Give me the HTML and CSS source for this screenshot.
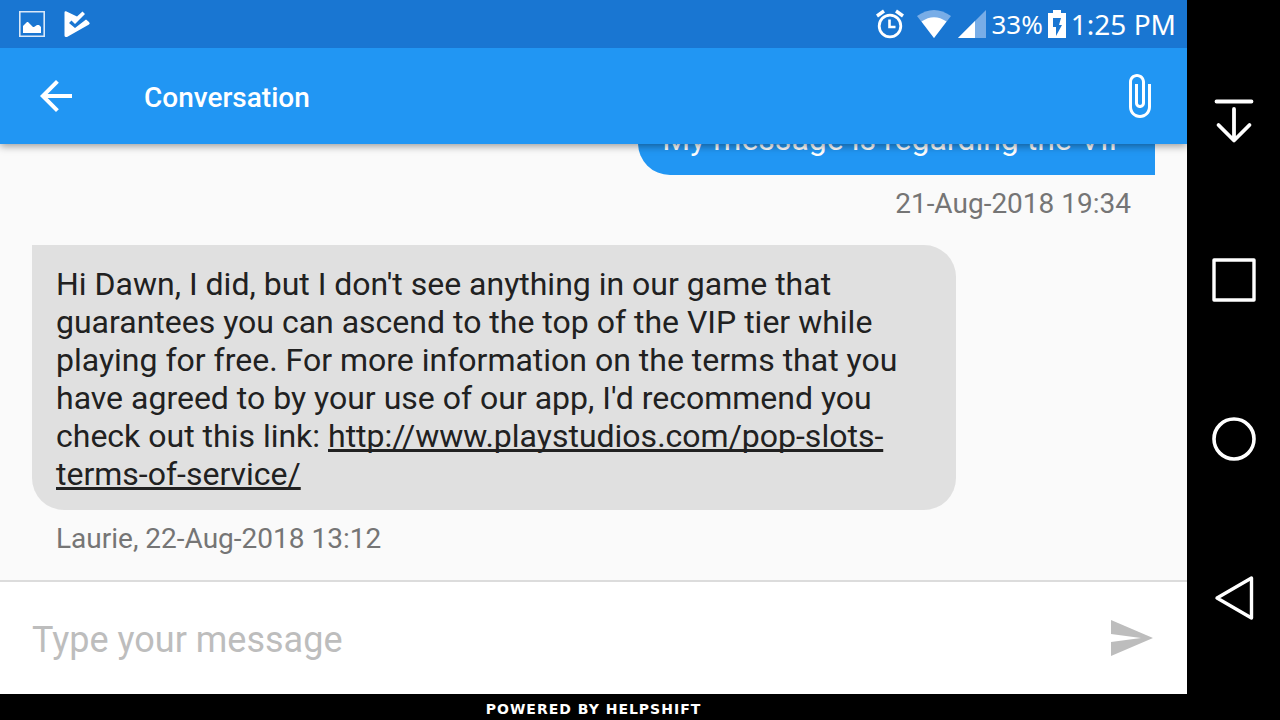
FILE: index.html
```html
<!DOCTYPE html>
<html lang="en">
<head>
<meta charset="utf-8">
<meta name="viewport" content="width=device-width, initial-scale=1">
<title>Conversation</title>
<link rel="stylesheet" href="styles.css">
</head>
<body class="device">
<div class="app">
  <div class="status">
    <div class="status-notes">
      <svg width="26" height="26" viewBox="0 0 26 26" aria-hidden="true"><path d="M.8.8h24.4v24.4H.8z" fill="none" stroke="#d9e8f8" stroke-width="1.6"/><path d="M4 22v-7l4-4h1l5 5h1l3-2h2l2 2v6z" fill="#fff"/></svg>
      <svg width="26" height="26" viewBox="0 0 26 26" aria-hidden="true"><path d="M.5 1.5Q.5 0 2 .3L13 5.500 18.500.5 21 3 11 13 7.500 9.500 5 12l6 5L22 8.500l3 2.500q1.500 1.500 0 2.500L3 26Q.5 26.500.5 24.500z" fill="#fff"/></svg>
    </div>
    <div class="status-system">
      <svg class="alarm" width="28" height="28" viewBox="0 0 28 28" aria-hidden="true"><g fill="none" stroke="#fff"><circle cx="14" cy="16" r="10.800" stroke-width="2.800"/><path d="M13.500 9.500v7.500h6" stroke-width="2.600"/><path d="M1 6l7-5M27 6l-7-5" stroke-width="3.400"/></g></svg>
      <svg class="wifi" width="34" height="28" viewBox="0 0 34 28" aria-hidden="true"><path d="M0 6Q17-6 34 6L17 28z" fill="#78ade7"/><path d="M4.500 11.500Q17 3 29.500 11.500L17 28z" fill="#fff"/></svg>
      <svg class="signal" width="28" height="28" viewBox="0 0 28 28" aria-hidden="true"><path d="M28 0v28H0z" fill="#78ade7"/><path d="M17 11v17H0z" fill="#fff"/></svg>
      <span class="charge">33%</span>
      <svg class="battery" width="18" height="28" viewBox="0 0 18 28" aria-hidden="true"><path d="M5 0h8v3h5v25H0V3h5z" fill="#fff"/><path d="M5 8h8l-2 7h3L8 26v-9H5z" fill="#1976d2"/></svg>
      <time class="clock">1:25 PM</time>
    </div>
  </div>

  <header class="bar">
    <button class="icon-button" type="button" aria-label="Back"><svg width="48" height="48" viewBox="0 0 24 24" aria-hidden="true"><path d="M20 11H7.830l5.590-5.590L12 4l-8 8 8 8 1.410-1.410L7.830 13H20z" fill="#fff"/></svg></button>
    <h1 class="title">Conversation</h1>
    <button class="icon-button" type="button" aria-label="Attach a file"><svg width="48" height="48" viewBox="0 0 24 24" aria-hidden="true"><path d="M16.500 6v11.500c0 2.210-1.790 4-4 4s-4-1.790-4-4V5c0-1.380 1.120-2.500 2.500-2.500s2.500 1.120 2.500 2.500v10.500c0 .55-.45 1-1 1s-1-.45-1-1V6H10v9.500c0 1.380 1.120 2.500 2.500 2.500s2.500-1.120 2.500-2.500V5c0-2.210-1.790-4-4-4S7 2.790 7 5v12.500c0 3.040 2.460 5.500 5.500 5.500s5.500-2.460 5.500-5.500V6z" fill="#fff"/></svg></button>
  </header>

  <main class="messages">
    <article class="message sent">
      <p class="bubble">My message is regarding the VIP</p>
      <time class="caption">21-Aug-2018 19:34</time>
    </article>
    <article class="message received">
      <p class="bubble">Hi Dawn, I did, but I don't see anything in our game that guarantees you can ascend to the top of the VIP tier while playing for free. For more information on the terms that you have agreed to by your use of our app, I'd recommend you check out this link: <a class="link" href="http://www.playstudios.com/pop-slots-terms-of-service/">http://www.playstudios.com/pop-slots-terms-of-service/</a></p>
      <span class="caption">Laurie, 22-Aug-2018 13:12</span>
    </article>
  </main>

  <form class="composer">
    <input class="field" type="text" placeholder="Type your message" aria-label="Type your message">
    <button class="icon-button" type="submit" aria-label="Send"><svg width="48" height="48" viewBox="0 0 24 24" aria-hidden="true"><path d="M2 3l21 9-21 9v-7l15-2-15-2z" fill="#bdbdbd"/></svg></button>
  </form>
  <footer class="credit">POWERED BY HELPSHIFT</footer>
</div>

<nav class="keys" aria-label="System">
  <button class="key" type="button" aria-label="Notifications"><svg width="44" height="44" viewBox="0 0 44 44" aria-hidden="true"><path d="M4.500 2.500h35M22 10v31M6.500 26L22 41.500 37.500 26" fill="none" stroke="#fff" stroke-width="3.800" stroke-linecap="round" stroke-linejoin="round"/></svg></button>
  <button class="key" type="button" aria-label="Recent apps"><svg width="44" height="44" viewBox="0 0 44 44" aria-hidden="true"><path d="M2 2h40v40H2z" fill="none" stroke="#fff" stroke-width="3.400" stroke-linejoin="round"/></svg></button>
  <button class="key" type="button" aria-label="Home"><svg width="44" height="44" viewBox="0 0 44 44" aria-hidden="true"><circle cx="22" cy="22" r="20" fill="none" stroke="#fff" stroke-width="3.600"/></svg></button>
  <button class="key" type="button" aria-label="Back"><svg width="44" height="44" viewBox="0 0 44 44" aria-hidden="true"><path d="M39.500 2v40L5 22z" fill="none" stroke="#fff" stroke-width="3.400" stroke-linejoin="round"/></svg></button>
</nav>
</body>
</html>
```
FILE: styles.css
```css
* {
  box-sizing: border-box;
}

.device {
  display: grid;
  grid-template-columns: minmax(0, 1fr) 93px;
  height: 100vh;
  margin: 0;
  background: #000;
  font-family: Roboto, sans-serif;
  overflow: hidden;
}

.device svg {
  display: block;
  overflow: visible;
}

.app {
  display: flex;
  flex-direction: column;
  min-height: 0;
  overflow: hidden;
}

.status {
  position: relative;
  z-index: 2;
  display: flex;
  justify-content: space-between;
  align-items: center;
  height: 48px;
  flex: none;
  padding: 0 11px 0 19px;
  background: #1976d2;
  color: #fff;
  font-family: "Noto Sans", sans-serif;
}

.status-notes,
.status-system {
  display: flex;
  align-items: center;
}

.status-notes {
  gap: 19px;
}

.wifi {
  margin-left: 13px;
}

.signal {
  margin: 0 5px 0 7px;
}

.charge {
  font-size: 26px;
  line-height: 48px;
}

.battery {
  margin: 0 5px;
}

.clock {
  font-size: 28px;
  line-height: 48px;
}

.bar {
  position: relative;
  z-index: 1;
  display: flex;
  align-items: center;
  height: 96px;
  flex: none;
  padding: 0 24px 0 32px;
  background: #2196f3;
  color: #fff;
  box-shadow: 0 2px 8px rgba(0, 0, 0, 0.4);
}

.icon-button,
.key {
  padding: 0;
  border: 0;
  background: none;
  cursor: pointer;
}

.icon-button {
  flex: none;
}

.title {
  flex: 1;
  margin: 0 0 0 64px;
  padding-top: 4px;
  font-size: 28px;
  font-weight: 500;
  line-height: 36px;
}

.messages {
  display: flex;
  flex: 1;
  flex-direction: column;
  justify-content: flex-end;
  gap: 24px;
  min-height: 0;
  padding: 0 32px 24px;
  overflow: hidden;
  background: #fafafa;
}

.message {
  display: flex;
  flex: none;
  flex-direction: column;
  gap: 12px;
}

.sent {
  align-items: flex-end;
}

.received {
  align-items: flex-start;
  margin-right: 199px;
}

.bubble {
  margin: 0;
  padding: 20px 24px 17px;
  font-size: 32px;
  line-height: 38px;
}

.sent .bubble {
  padding-right: 26px;
  border-radius: 32px 32px 0 32px;
  background: #2196f3;
  color: #fff;
}

.received .bubble {
  border-radius: 0 32px 32px 32px;
  background: #e0e0e0;
  color: #212121;
}

.link {
  color: inherit;
  text-decoration: underline;
  text-decoration-skip-ink: none;
}

.caption {
  padding: 0 24px;
  color: #757575;
  font-size: 28px;
  line-height: 34px;
}

.composer {
  display: flex;
  align-items: center;
  height: 114px;
  flex: none;
  padding: 0 32px;
  border-top: 2px solid #dcdcdc;
  background: #fff;
}

.field {
  flex: 1;
  min-width: 0;
  padding: 4px 0 0;
  border: 0;
  outline: 0;
  background: none;
  color: #212121;
  font: 36px/48px Roboto, sans-serif;
}

.field::placeholder {
  color: #bdbdbd;
  opacity: 1;
}

.credit {
  flex: none;
  padding-top: 4px;
  color: #fff;
  font: bold 14px/22px "DejaVu Sans", sans-serif;
  letter-spacing: 1px;
  text-align: center;
}

.keys {
  display: flex;
  flex-direction: column;
  padding: 41px 0 43px;
}

.key {
  display: flex;
  flex: 1;
  align-items: center;
  justify-content: center;
}
```
